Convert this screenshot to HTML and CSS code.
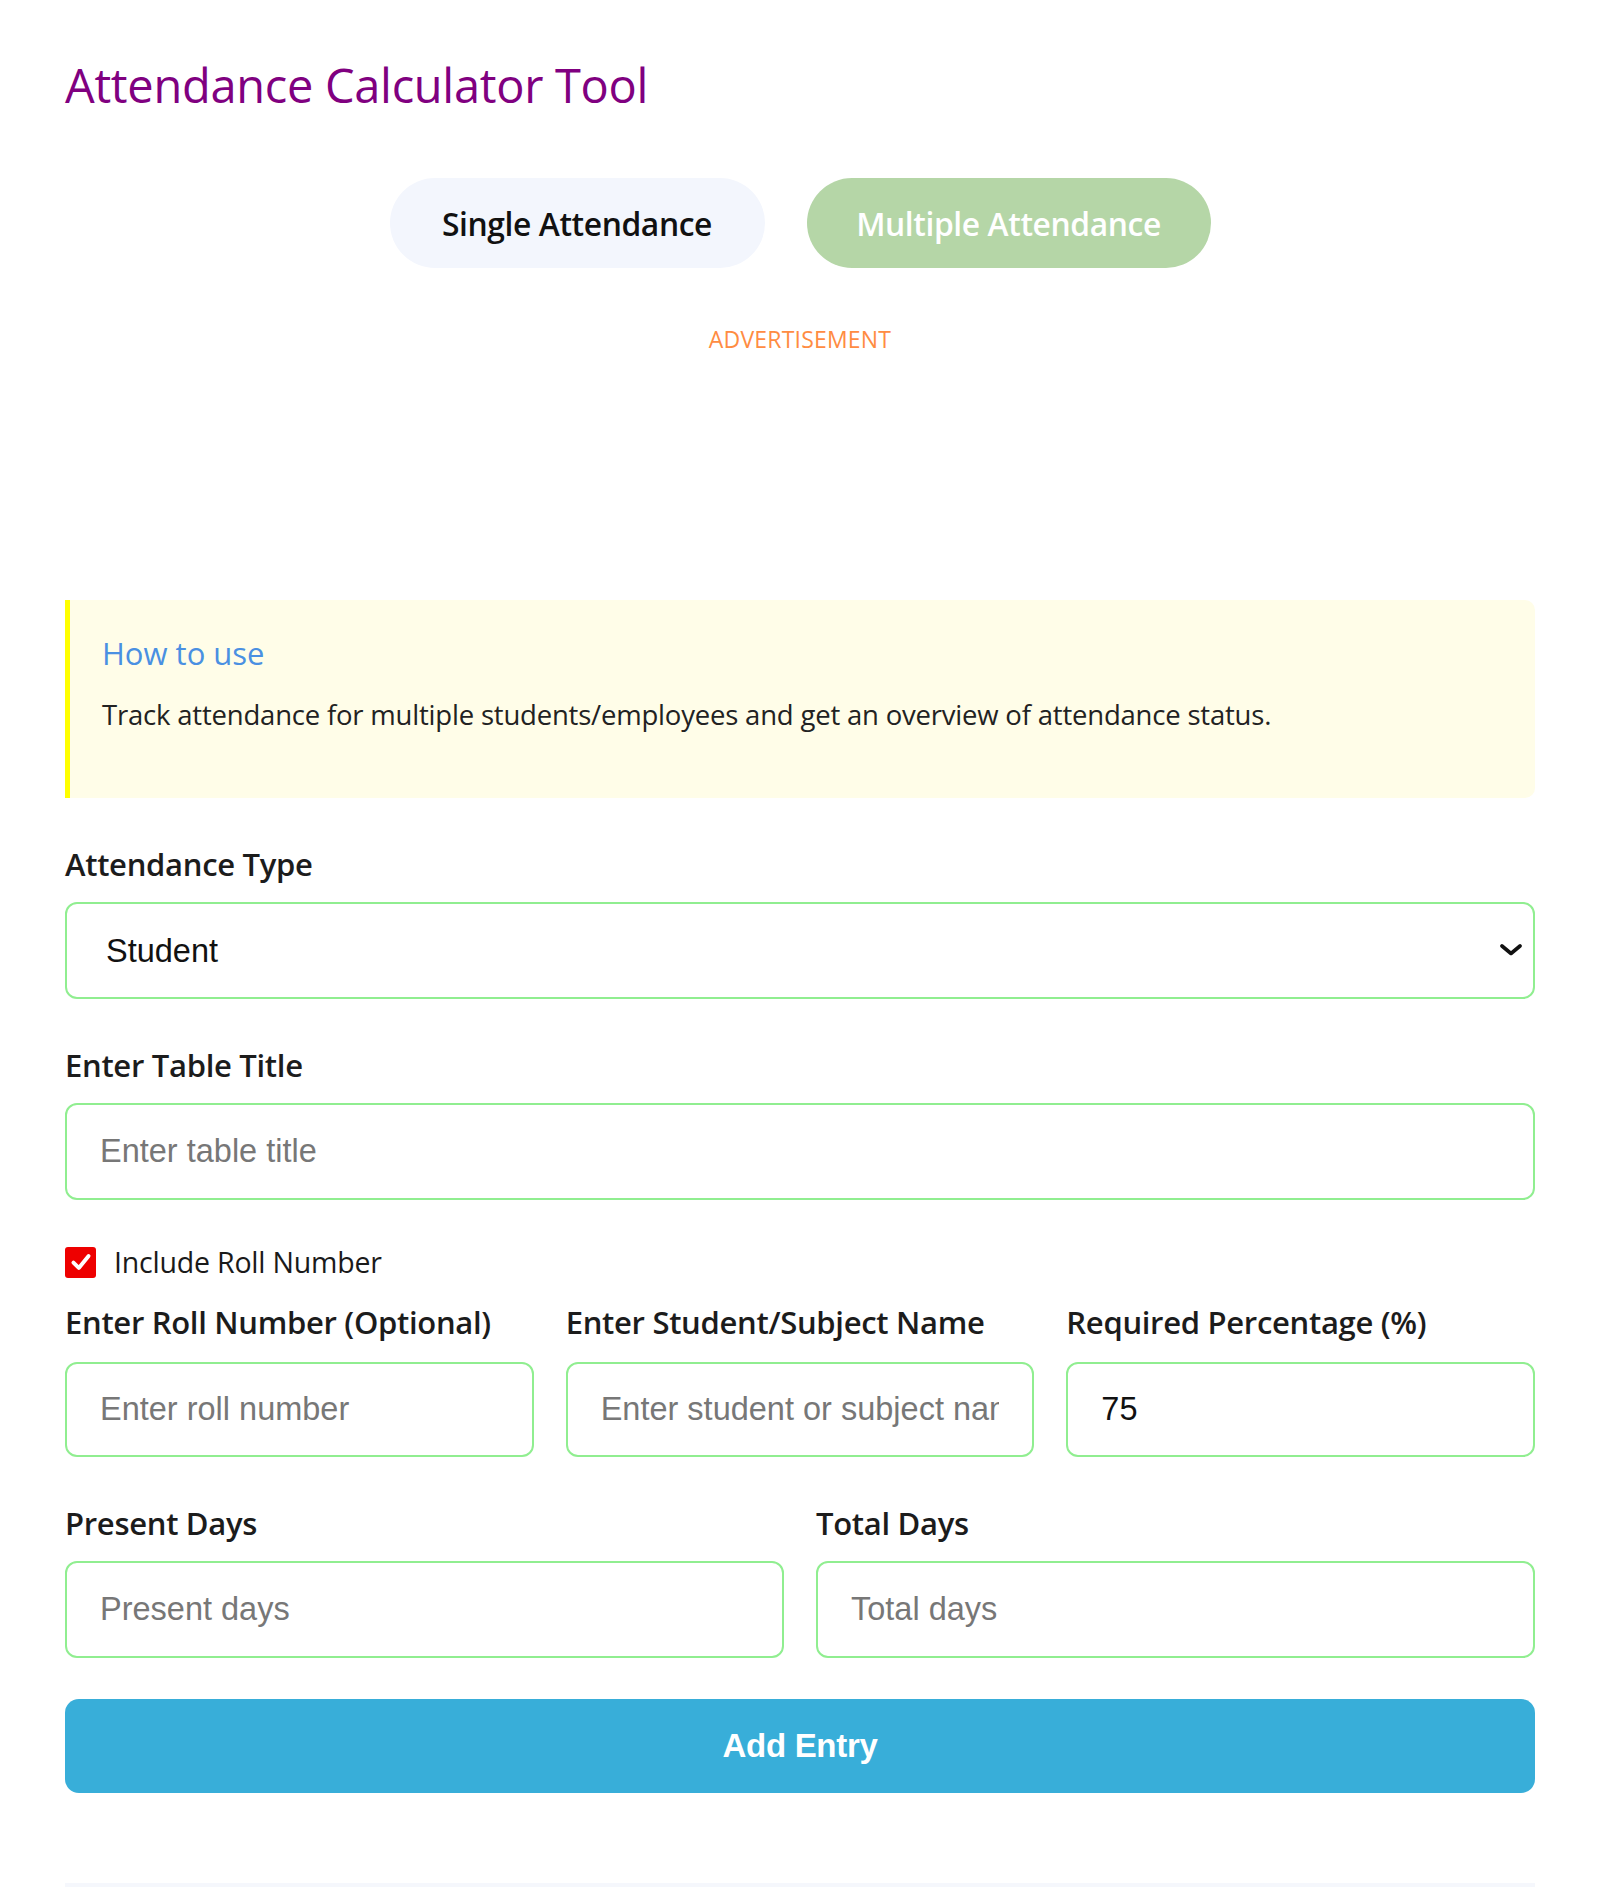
FILE: index.html
```html
<!DOCTYPE html>
<html lang="en">
<head>
<meta charset="utf-8">
<title>Attendance Calculator Tool</title>
<link rel="stylesheet" href="styles.css">
</head>
<body>
<main class="page">
  <h1 class="title">Attendance Calculator Tool</h1>

  <div class="tabs">
    <button class="tab tab-single" type="button">Single Attendance</button>
    <button class="tab tab-multiple" type="button">Multiple Attendance</button>
  </div>

  <div class="ad">
    <span class="ad-label">ADVERTISEMENT</span>
  </div>

  <section class="howto">
    <h2 class="howto-title">How to use</h2>
    <p class="howto-text">Track attendance for multiple students/employees and get an overview of attendance status.</p>
  </section>

  <div class="field">
    <label class="label" for="type">Attendance Type</label>
    <div class="select-wrap">
      <select id="type" class="control select">
        <option>Student</option>
        <option>Employee</option>
      </select>
      <svg class="chevron" viewBox="0 0 24 12" aria-hidden="true"><path d="M3 2 L12 9.5 L21 2" fill="none" stroke="#111" stroke-width="3.6" stroke-linecap="round" stroke-linejoin="round"/></svg>
    </div>
  </div>

  <div class="field">
    <label class="label" for="title">Enter Table Title</label>
    <input id="title" class="control" type="text" placeholder="Enter table title">
  </div>

  <label class="check-row">
    <span class="check-box">
      <svg viewBox="0 0 24 24" aria-hidden="true"><path d="M5 12.5 L10 17.5 L19 6.5" fill="none" stroke="#fff" stroke-width="3.6" stroke-linecap="round" stroke-linejoin="round"/></svg>
    </span>
    <span class="check-text">Include Roll Number</span>
  </label>

  <div class="grid grid-3">
    <div class="field tight">
      <label class="label" for="roll">Enter Roll Number (Optional)</label>
      <input id="roll" class="control" type="text" placeholder="Enter roll number">
    </div>
    <div class="field tight">
      <label class="label" for="name">Enter Student/Subject Name</label>
      <input id="name" class="control" type="text" placeholder="Enter student or subject name">
    </div>
    <div class="field tight">
      <label class="label" for="req">Required Percentage (%)</label>
      <input id="req" class="control" type="text" value="75">
    </div>
  </div>

  <div class="grid grid-2">
    <div class="field">
      <label class="label" for="present">Present Days</label>
      <input id="present" class="control" type="text" placeholder="Present days">
    </div>
    <div class="field">
      <label class="label" for="total">Total Days</label>
      <input id="total" class="control" type="text" placeholder="Total days">
    </div>
  </div>

  <button class="add" type="button">Add Entry</button>

  <div class="next-block"></div>
</main>
</body>
</html>
```

FILE: styles.css
```css
* {
  box-sizing: border-box;
}

html, body {
  margin: 0;
  padding: 0;
  background: #ffffff;
}

body {
  font-family: "Open Sans", "Noto Sans", sans-serif;
  color: #1a1a1a;
}

.page {
  padding: 0 65px;
  display: flex;
  flex-direction: column;
}

.title {
  margin: 55px 0 0;
  font-size: 47px;
  line-height: 60px;
  font-weight: 400;
  color: #800080;
  letter-spacing: -0.3px;
}

.tabs {
  margin-top: 63px;
  display: flex;
  justify-content: center;
  gap: 42px;
}

.tab {
  height: 90px;
  border: none;
  border-radius: 45px;
  padding: 0;
  font-family: "Open Sans", "Noto Sans", sans-serif;
  font-size: 31.8px;
  font-weight: 600;
  letter-spacing: -0.4px;
  cursor: pointer;
}

.tab-single {
  width: 375px;
  background: #f3f6fd;
  color: #111111;
}

.tab-multiple {
  width: 404px;
  background: #b5d6a7;
  color: #ffffff;
}

.ad {
  margin-top: 56px;
  height: 276px;
  display: flex;
  justify-content: center;
  align-items: flex-start;
}

.ad-label {
  font-size: 23px;
  line-height: 30px;
  color: #ff8c42;
  letter-spacing: 0.2px;
}

.howto {
  height: 198px;
  background: #fffde8;
  border-left: 5px solid #ffff00;
  border-radius: 0 10px 10px 0;
  padding: 33px 32px 0;
}

.howto-title {
  margin: 0;
  font-size: 31px;
  line-height: 40px;
  font-weight: 400;
  color: #4a90e2;
}

.howto-text {
  margin: 24px 0 0;
  font-size: 27.5px;
  line-height: 36px;
  color: #222222;
  letter-spacing: -0.2px;
}

.field {
  display: flex;
  flex-direction: column;
  gap: 20px;
  margin-top: 48px;
}

.field.tight {
  margin-top: 0;
}

.label {
  font-size: 31px;
  line-height: 36px;
  font-weight: 600;
  color: #1c1c1c;
  letter-spacing: -0.3px;
}

.control {
  width: 100%;
  height: 97px;
  border: 2px solid #90ee90;
  border-radius: 12px;
  padding: 0 33px;
  font-family: "Liberation Sans", Arial, sans-serif;
  font-size: 32.5px;
  color: #111111;
  background: #ffffff;
  outline: none;
}

.control::placeholder {
  color: #777777;
}

.select-wrap {
  position: relative;
}

.select {
  appearance: none;
  -webkit-appearance: none;
  padding-left: 39px;
}

.chevron {
  position: absolute;
  right: 12px;
  top: 42px;
  width: 24px;
  height: 12px;
  pointer-events: none;
}

.check-row {
  margin-top: 44px;
  display: flex;
  align-items: center;
  gap: 18px;
  height: 36px;
}

.check-box {
  width: 31px;
  height: 31px;
  border-radius: 3px;
  background: #ee0000;
  display: flex;
  align-items: center;
  justify-content: center;
}

.check-box svg {
  width: 26px;
  height: 26px;
}

.check-text {
  font-size: 28.5px;
  line-height: 36px;
  color: #1a1a1a;
  letter-spacing: -0.2px;
}

.grid {
  display: grid;
  column-gap: 32px;
}

.grid-3 {
  margin-top: 24px;
  grid-template-columns: repeat(3, 1fr);
}

.grid-3 .field {
  gap: 22px;
}

.grid-3 .control {
  height: 95px;
}

.grid-2 {
  grid-template-columns: repeat(2, 1fr);
}

.add {
  margin-top: 41px;
  height: 94px;
  width: 100%;
  border: none;
  border-radius: 14px;
  background: #38aed9;
  color: #ffffff;
  font-family: "Liberation Sans", Arial, sans-serif;
  font-size: 33px;
  font-weight: 700;
  letter-spacing: -0.3px;
  cursor: pointer;
}

.next-block {
  margin-top: 90px;
  height: 40px;
  background: #f5f7fc;
}
```
